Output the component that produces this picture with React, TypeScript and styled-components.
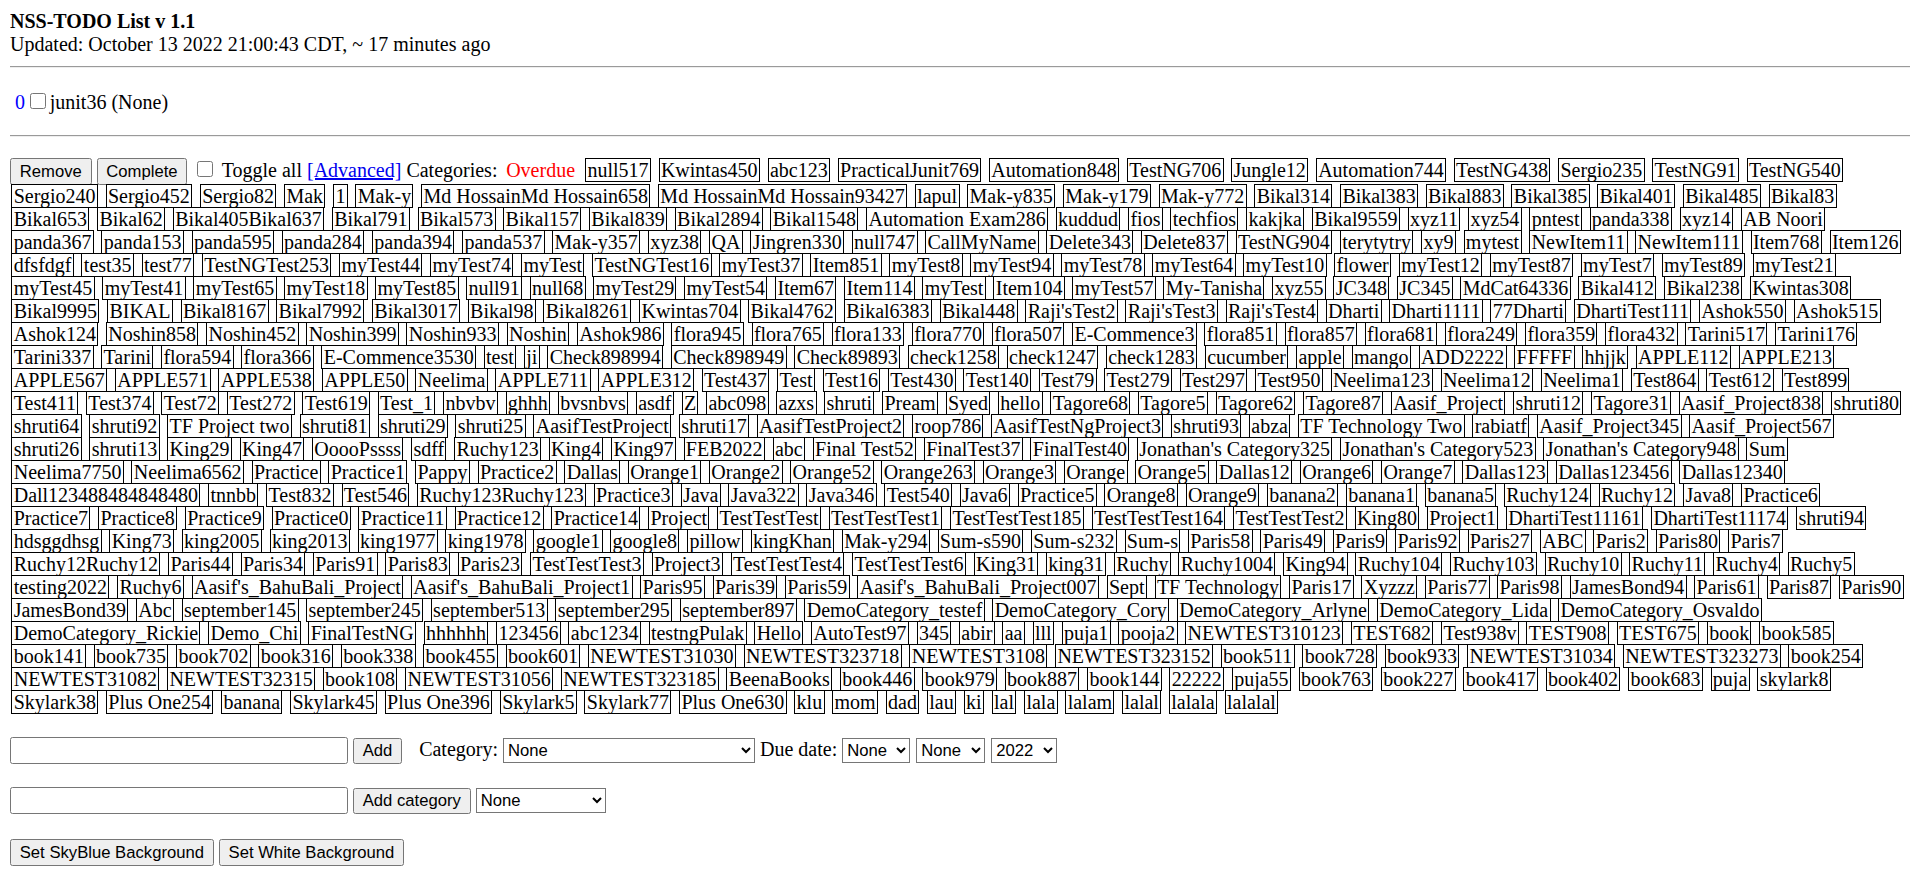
import React from "react";
import styled, { createGlobalStyle } from "styled-components";

const GlobalStyle = createGlobalStyle`
  html {
    background: #ffffff;
    overflow: hidden;
  }
  body {
    margin: 10px;
    font-family: "Liberation Serif", "Times New Roman", serif;
    font-size: 20px;
    line-height: normal;
    color: #000000;
  }
`;

const Header = styled.header`
  display: block;
`;

const Title = styled.b`
  font-weight: bold;
`;

const Rule = styled.hr`
  margin: 10px 0;
  height: 0;
  border: none;
  border-top: 1px solid #9a9a9a;
  border-bottom: 1px solid #eeeeee;
`;

const TaskList = styled.div`
  margin: 21px 0 21px;
  padding-left: 5px;
`;

const TaskCount = styled.span`
  color: #0000ff;
`;

const Check = styled.input.attrs({ type: "checkbox" })`
  width: 16px;
  height: 16px;
  margin: 3.75px 3.75px 3.75px 5px;
`;

const Toolbar = styled.form`
  margin: 20px 0 0;
  white-space: nowrap;
`;

const Btn = styled.button`
  display: inline-block;
  box-sizing: border-box;
  height: 26.5px;
  margin: 0;
  padding: 0 8.75px;
  font-family: "Liberation Sans", Arial, sans-serif;
  font-size: 16.6667px;
  color: #000000;
  background: #efefef;
  border: 1px solid #767676;
  border-radius: 2.5px;
`;

const AdvancedLink = styled.a`
  color: #0000ee;
  text-decoration: underline;
`;

const Cat = styled.span<{ $overdue?: boolean }>`
  border: 1px solid ${(p) => (p.$overdue ? "transparent" : "#000000")};
  padding: 0 1.35px;
  margin: 0 1.35px;
  white-space: nowrap;
  color: ${(p) => (p.$overdue ? "#ff0000" : "#000000")};
`;

const FormRow = styled.form<{ $mt: number }>`
  display: flex;
  align-items: baseline;
  gap: 5px;
  margin: ${(p) => p.$mt}px 0 0;
`;

const TextField = styled.input.attrs({ type: "text" })`
  box-sizing: border-box;
  width: 338px;
  height: 27px;
  margin: 0;
  padding: 1px 2px;
  font-family: "Liberation Sans", Arial, sans-serif;
  font-size: 16.6667px;
  border: 1px solid #767676;
  border-radius: 2.5px;
  background: #ffffff;
`;

const Label = styled.span<{ $ml?: number }>`
  margin-left: ${(p) => p.$ml ?? 0}px;
  white-space: nowrap;
`;

const Select = styled.select<{ $w: number; $ml?: number }>`
  box-sizing: border-box;
  width: ${(p) => p.$w}px;
  height: 25px;
  margin: 0 0 0 ${(p) => p.$ml ?? 0}px;
  font-family: "Liberation Sans", Arial, sans-serif;
  font-size: 16.6667px;
  color: #000000;
  background: #ffffff;
  border: 1px solid #767676;
  border-radius: 0;
`;

const firstRow: string[] = [
  "null517", "Kwintas450", "abc123", "PracticalJunit769", "Automation848", "TestNG706", "Jungle12", "Automation744", "TestNG438", "Sergio235", "TestNG91", "TestNG540",
];

const rows: string[][] = [
  ["Sergio240", "Sergio452", "Sergio82", "Mak", "1", "Mak-y", "Md HossainMd Hossain658", "Md HossainMd Hossain93427", "lapul", "Mak-y835", "Mak-y179", "Mak-y772", "Bikal314", "Bikal383", "Bikal883", "Bikal385", "Bikal401", "Bikal485", "Bikal83"],
  ["Bikal653", "Bikal62", "Bikal405Bikal637", "Bikal791", "Bikal573", "Bikal157", "Bikal839", "Bikal2894", "Bikal1548", "Automation Exam286", "kuddud", "fios", "techfios", "kakjka", "Bikal9559", "xyz11", "xyz54", "pntest", "panda338", "xyz14", "AB Noori"],
  ["panda367", "panda153", "panda595", "panda284", "panda394", "panda537", "Mak-y357", "xyz38", "QA", "Jingren330", "null747", "CallMyName", "Delete343", "Delete837", "TestNG904", "terytytry", "xy9", "mytest", "NewItem11", "NewItem111", "Item768", "Item126"],
  ["dfsfdgf", "test35", "test77", "TestNGTest253", "myTest44", "myTest74", "myTest", "TestNGTest16", "myTest37", "Item851", "myTest8", "myTest94", "myTest78", "myTest64", "myTest10", "flower", "myTest12", "myTest87", "myTest7", "myTest89", "myTest21"],
  ["myTest45", "myTest41", "myTest65", "myTest18", "myTest85", "null91", "null68", "myTest29", "myTest54", "Item67", "Item114", "myTest", "Item104", "myTest57", "My-Tanisha", "xyz55", "JC348", "JC345", "MdCat64336", "Bikal412", "Bikal238", "Kwintas308"],
  ["Bikal9995", "BIKAL", "Bikal8167", "Bikal7992", "Bikal3017", "Bikal98", "Bikal8261", "Kwintas704", "Bikal4762", "Bikal6383", "Bikal448", "Raji'sTest2", "Raji'sTest3", "Raji'sTest4", "Dharti", "Dharti1111", "77Dharti", "DhartiTest111", "Ashok550", "Ashok515"],
  ["Ashok124", "Noshin858", "Noshin452", "Noshin399", "Noshin933", "Noshin", "Ashok986", "flora945", "flora765", "flora133", "flora770", "flora507", "E-Commence3", "flora851", "flora857", "flora681", "flora249", "flora359", "flora432", "Tarini517", "Tarini176"],
  ["Tarini337", "Tarini", "flora594", "flora366", "E-Commence3530", "test", "ji", "Check898994", "Check898949", "Check89893", "check1258", "check1247", "check1283", "cucumber", "apple", "mango", "ADD2222", "FFFFF", "hhjjk", "APPLE112", "APPLE213"],
  ["APPLE567", "APPLE571", "APPLE538", "APPLE50", "Neelima", "APPLE711", "APPLE312", "Test437", "Test", "Test16", "Test430", "Test140", "Test79", "Test279", "Test297", "Test950", "Neelima123", "Neelima12", "Neelima1", "Test864", "Test612", "Test899"],
  ["Test411", "Test374", "Test72", "Test272", "Test619", "Test_1", "nbvbv", "ghhh", "bvsnbvs", "asdf", "Z", "abc098", "azxs", "shruti", "Pream", "Syed", "hello", "Tagore68", "Tagore5", "Tagore62", "Tagore87", "Aasif_Project", "shruti12", "Tagore31", "Aasif_Project838", "shruti80"],
  ["shruti64", "shruti92", "TF Project two", "shruti81", "shruti29", "shruti25", "AasifTestProject", "shruti17", "AasifTestProject2", "roop786", "AasifTestNgProject3", "shruti93", "abza", "TF Technology Two", "rabiatf", "Aasif_Project345", "Aasif_Project567"],
  ["shruti26", "shruti13", "King29", "King47", "OoooPssss", "sdff", "Ruchy123", "King4", "King97", "FEB2022", "abc", "Final Test52", "FinalTest37", "FinalTest40", "Jonathan's Category325", "Jonathan's Category523", "Jonathan's Category948", "Sum"],
  ["Neelima7750", "Neelima6562", "Practice", "Practice1", "Pappy", "Practice2", "Dallas", "Orange1", "Orange2", "Orange52", "Orange263", "Orange3", "Orange", "Orange5", "Dallas12", "Orange6", "Orange7", "Dallas123", "Dallas123456", "Dallas12340"],
  ["Dall123488484848480", "tnnbb", "Test832", "Test546", "Ruchy123Ruchy123", "Practice3", "Java", "Java322", "Java346", "Test540", "Java6", "Practice5", "Orange8", "Orange9", "banana2", "banana1", "banana5", "Ruchy124", "Ruchy12", "Java8", "Practice6"],
  ["Practice7", "Practice8", "Practice9", "Practice0", "Practice11", "Practice12", "Practice14", "Project", "TestTestTest", "TestTestTest1", "TestTestTest185", "TestTestTest164", "TestTestTest2", "King80", "Project1", "DhartiTest11161", "DhartiTest11174", "shruti94"],
  ["hdsggdhsg", "King73", "king2005", "king2013", "king1977", "king1978", "google1", "google8", "pillow", "kingKhan", "Mak-y294", "Sum-s590", "Sum-s232", "Sum-s", "Paris58", "Paris49", "Paris9", "Paris92", "Paris27", "ABC", "Paris2", "Paris80", "Paris7"],
  ["Ruchy12Ruchy12", "Paris44", "Paris34", "Paris91", "Paris83", "Paris23", "TestTestTest3", "Project3", "TestTestTest4", "TestTestTest6", "King31", "king31", "Ruchy", "Ruchy1004", "King94", "Ruchy104", "Ruchy103", "Ruchy10", "Ruchy11", "Ruchy4", "Ruchy5"],
  ["testing2022", "Ruchy6", "Aasif's_BahuBali_Project", "Aasif's_BahuBali_Project1", "Paris95", "Paris39", "Paris59", "Aasif's_BahuBali_Project007", "Sept", "TF Technology", "Paris17", "Xyzzz", "Paris77", "Paris98", "JamesBond94", "Paris61", "Paris87", "Paris90"],
  ["JamesBond39", "Abc", "september145", "september245", "september513", "september295", "september897", "DemoCategory_testef", "DemoCategory_Cory", "DemoCategory_Arlyne", "DemoCategory_Lida", "DemoCategory_Osvaldo"],
  ["DemoCategory_Rickie", "Demo_Chi", "FinalTestNG", "hhhhhh", "123456", "abc1234", "testngPulak", "Hello", "AutoTest97", "345", "abir", "aa", "lll", "puja1", "pooja2", "NEWTEST310123", "TEST682", "Test938v", "TEST908", "TEST675", "book", "book585"],
  ["book141", "book735", "book702", "book316", "book338", "book455", "book601", "NEWTEST31030", "NEWTEST323718", "NEWTEST3108", "NEWTEST323152", "book511", "book728", "book933", "NEWTEST31034", "NEWTEST323273", "book254"],
  ["NEWTEST31082", "NEWTEST32315", "book108", "NEWTEST31056", "NEWTEST323185", "BeenaBooks", "book446", "book979", "book887", "book144", "22222", "puja55", "book763", "book227", "book417", "book402", "book683", "puja", "skylark8"],
  ["Skylark38", "Plus One254", "banana", "Skylark45", "Plus One396", "Skylark5", "Skylark77", "Plus One630", "klu", "mom", "dad", "lau", "ki", "lal", "lala", "lalam", "lalal", "lalala", "lalalal"],
];

export default function App() {
  return (
    <>
      <GlobalStyle />
      <Header>
        <Title>NSS-TODO List v 1.1</Title>
        <br />
        Updated: October 13 2022 21:00:43 CDT, ~ 17 minutes ago
      </Header>
      <Rule />
      <TaskList>
        <TaskCount>0</TaskCount>
        <Check />
        {"junit36 (None)"}
      </TaskList>
      <Rule />
      <Toolbar>
        <Btn type="button">Remove</Btn>
        {" "}
        <Btn type="button">Complete</Btn>
        {" "}
        <Check />
        {" Toggle all "}
        <AdvancedLink href="#">[Advanced]</AdvancedLink>
        {" Categories: "}
        <Cat $overdue>Overdue</Cat>
        {firstRow.map((c, i) => (
          <React.Fragment key={`f${i}`}>
            {" "}
            <Cat>{c}</Cat>
          </React.Fragment>
        ))}
        {rows.map((row, r) => (
          <React.Fragment key={`r${r}`}>
            <br />
            {row.map((c, i) => (
              <React.Fragment key={`r${r}c${i}`}>
                {i > 0 ? " " : null}
                <Cat>{c}</Cat>
              </React.Fragment>
            ))}
          </React.Fragment>
        ))}
      </Toolbar>
      <FormRow $mt={23.5}>
        <TextField />
        <Btn type="button">Add</Btn>
        <Label $ml={12}>Category:</Label>
        <Select $w={252} defaultValue="None">
          <option>None</option>
        </Select>
        <Label>Due date:</Label>
        <Select $w={68}>
          <option>None</option>
        </Select>
        <Select $w={69} $ml={1}>
          <option>None</option>
        </Select>
        <Select $w={66} $ml={1}>
          <option>2022</option>
        </Select>
      </FormRow>
      <FormRow $mt={23}>
        <TextField />
        <Btn type="button">Add category</Btn>
        <Select $w={130}>
          <option>None</option>
        </Select>
      </FormRow>
      <FormRow $mt={25}>
        <Btn type="button">Set SkyBlue Background</Btn>
        <Btn type="button">Set White Background</Btn>
      </FormRow>
    </>
  );
}
